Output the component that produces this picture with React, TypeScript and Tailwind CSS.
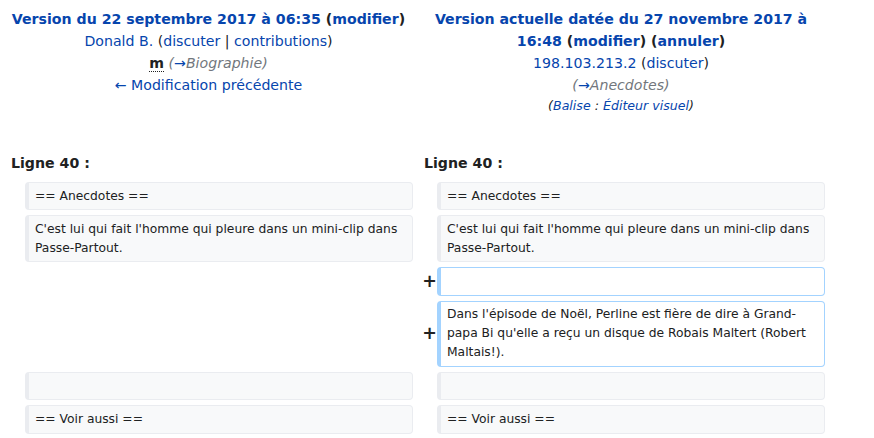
const link = 'text-[#0645ad]'

const Box = ({ text, added }: { text?: string; added?: boolean }) => (
  <div
    className={
      'min-h-[28.4px] rounded-[4px] border border-l-4 px-[6px] py-[3.5px] text-[12.3px] leading-[19px] text-[#202122] ' +
      (added ? 'border-[#a3d3ff] bg-white' : 'border-[#eaecf0] bg-[#f8f9fa]')
    }
  >
    {text}
  </div>
)

const Plus = () => (
  <div className="flex items-center justify-end text-[17.5px] font-bold leading-none text-[#202122]">+</div>
)

export default function App() {
  return (
    <div className="w-[874px] h-[438px] overflow-hidden bg-white text-[14.15px] text-[#202122]" style={{ fontFamily: '"DejaVu Sans", sans-serif' }}>
      {/* headers */}
      <div className="ml-1 grid w-[821px] grid-cols-[409px_412px] pt-2 leading-[22px]">
        <div className="text-center">
          <div className="font-bold">
            <span className={link}>Version du 22 septembre 2017 à 06:35</span> (<span className={link}>modifier</span>)
          </div>
          <div>
            <span className={link}>Donald B.</span> (<span className={link}>discuter</span> | <span className={link}>contributions</span>)
          </div>
          <div>
            <abbr className="font-bold no-underline border-b border-dotted border-[#202122]">m</abbr>{' '}
            <span className="italic text-[#72777d]">
              (<span className={link}>→</span>Biographie)
            </span>
          </div>
          <div className={link}>← Modification précédente</div>
        </div>
        <div className="pl-1 text-center">
          <div className="font-bold">
            <span className={link}>Version actuelle datée du 27 novembre 2017 à 16:48</span> (<span className={link}>modifier</span>) (<span className={link}>annuler</span>)
          </div>
          <div>
            <span className={link}>198.103.213.2</span> (<span className={link}>discuter</span>)
          </div>
          <div className="italic text-[#72777d]">
            (<span className={link}>→</span>Anecdotes)
          </div>
          <div className="text-[12.6px] italic leading-[20px]">
            (<span className={link}>Balise</span> : <span className={link}>Éditeur visuel</span>)
          </div>
        </div>
      </div>

      {/* diff */}
      <div className="ml-1 mt-[36px] grid grid-cols-[21px_388px_24px_388px] gap-y-[5px]">
        <div className="col-span-2 pb-[3px] pl-[7px] font-bold leading-[22px]">Ligne 40 :</div>
        <div className="col-span-2 pb-[3px] pl-[11px] font-bold leading-[22px]">Ligne 40 :</div>

        <div />
        <Box text="== Anecdotes ==" />
        <div />
        <Box text="== Anecdotes ==" />

        <div />
        <Box text="C'est lui qui fait l'homme qui pleure dans un mini-clip dans Passe-Partout." />
        <div />
        <Box text="C'est lui qui fait l'homme qui pleure dans un mini-clip dans Passe-Partout." />

        <div className="col-span-2" />
        <Plus />
        <Box added />

        <div className="col-span-2" />
        <Plus />
        <Box added text="Dans l'épisode de Noël, Perline est fière de dire à Grand-papa Bi qu'elle a reçu un disque de Robais Maltert (Robert Maltais!)." />

        <div />
        <Box />
        <div />
        <Box />

        <div />
        <Box text="== Voir aussi ==" />
        <div />
        <Box text="== Voir aussi ==" />
      </div>
    </div>
  )
}
